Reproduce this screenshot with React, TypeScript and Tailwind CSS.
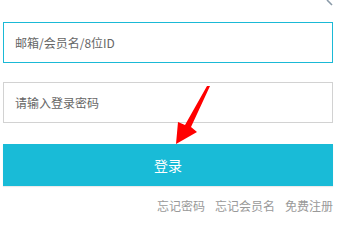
export default function App() {
  const font = { fontFamily: '"Noto Sans CJK SC", "Liberation Sans", sans-serif' }

  return (
    <div className="relative w-[344px] h-[223px] bg-white overflow-hidden" style={font}>
      {/* corner icon fragment */}
      <svg className="absolute right-[10px] top-0" width="8" height="7" viewBox="0 0 8 7">
        <path d="M1 0 L6 5" stroke="#8a9aa8" strokeWidth="1.6" />
      </svg>

      <div className="flex flex-col pl-[3px] pr-[11px] pt-[22px]">
        {/* Account */}
        <div className="h-[41px] border border-[#1ab9d6] flex items-center pl-[11px]">
          <span className="text-[12px] text-[#666] leading-none">邮箱/会员名/8位ID</span>
        </div>

        {/* Password */}
        <div className="h-[41px] mt-[19px] border border-[#d2d2d2] flex items-center pl-[11px]">
          <span className="text-[12px] text-[#666] leading-none">请输入登录密码</span>
        </div>

        {/* Submit */}
        <button className="h-[42px] mt-[21px] bg-[#19bbd7] text-white text-[14px] flex items-center justify-center shadow-[0_1px_1px_rgba(0,0,0,0.08)]">
          登录
        </button>

        {/* Links */}
        <div className="flex justify-end gap-[10px] mt-[11px] text-[12px] text-[#999] leading-[17px]">
          <span>忘记密码</span>
          <span>忘记会员名</span>
          <span>免费注册</span>
        </div>
      </div>

      {/* red pointer arrow */}
      <svg className="absolute left-0 top-0 pointer-events-none" width="344" height="223" viewBox="0 0 344 223">
        <polygon
          points="210,86 191,127 197,132 176,144 178,122 185,125 207,86"
          fill="#ff0000"
        />
      </svg>
    </div>
  )
}
